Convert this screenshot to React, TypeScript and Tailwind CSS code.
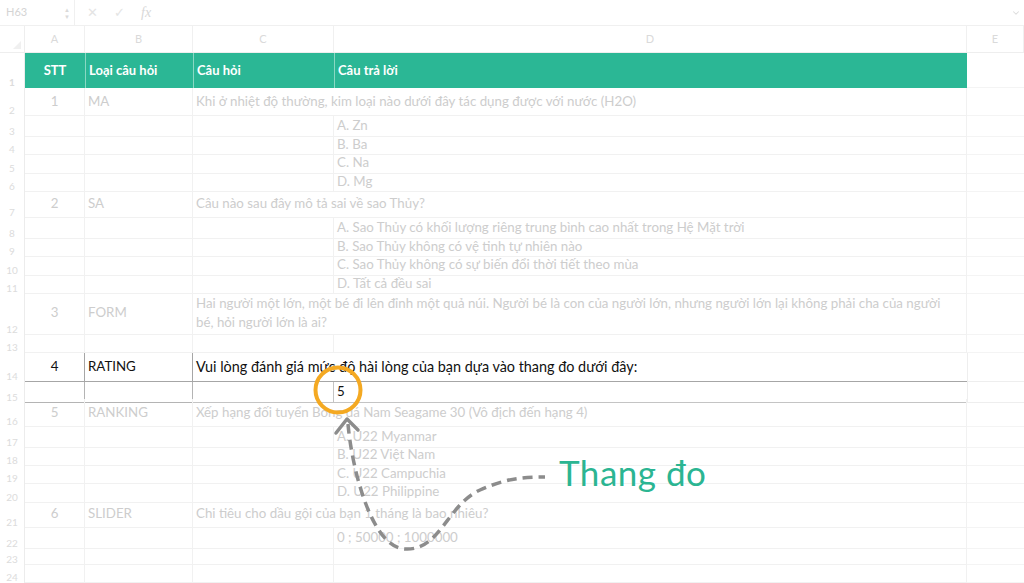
import { ChevronDown } from "lucide-react";

type RowData = {
  n: number;
  h: string;
  a?: string;
  b?: string;
  c?: React.ReactNode;
  d?: string;
};

const rows: RowData[] = [
  { n: 2, h: "h-[28px]", a: "1", b: "MA", c: "Khi ở nhiệt độ thường, kim loại nào dưới đây tác dụng được với nước (H2O)" },
  { n: 3, h: "h-[18.5px]", d: "A. Zn" },
  { n: 4, h: "h-[18.5px]", d: "B. Ba" },
  { n: 5, h: "h-[18.5px]", d: "C. Na" },
  { n: 6, h: "h-[18.5px]", d: "D. Mg" },
  { n: 7, h: "h-[28px]", a: "2", b: "SA", c: "Câu nào sau đây mô tả sai về sao Thủy?" },
  { n: 8, h: "h-[18.5px]", d: "A. Sao Thủy có khối lượng riêng trung bình cao nhất trong Hệ Mặt trời" },
  { n: 9, h: "h-[18.5px]", d: "B. Sao Thủy không có vệ tinh tự nhiên nào" },
  { n: 10, h: "h-[18.5px]", d: "C. Sao Thủy không có sự biến đổi thời tiết theo mùa" },
  { n: 11, h: "h-[18.5px]", d: "D. Tất cả đều sai" },
  {
    n: 12,
    h: "h-[43px]",
    a: "3",
    b: "FORM",
    c: (
      <>
        Hai người một lớn, một bé đi lên đỉnh một quả núi. Người bé là con của người lớn, nhưng người lớn lại không phải cha của người
        <br />
        bé, hỏi người lớn là ai?
      </>
    ),
  },
  { n: 13, h: "h-[18px]" },
];

const rowsAfter: RowData[] = [
  { n: 16, h: "h-[28px]", a: "5", b: "RANKING", c: "Xếp hạng đối tuyển Bóng đá Nam Seagame 30 (Vô địch đến hạng 4)" },
  { n: 17, h: "h-[18.25px]", d: "A. U22 Myanmar" },
  { n: 18, h: "h-[18.25px]", d: "B. U22 Việt Nam" },
  { n: 19, h: "h-[18.25px]", d: "C. U22 Campuchia" },
  { n: 20, h: "h-[18.25px]", d: "D. U22 Philippine" },
  { n: 21, h: "h-[28px]", a: "6", b: "SLIDER", c: "Chi tiêu cho dầu gội của bạn 1 tháng là bao nhiêu?" },
  { n: 22, h: "h-[19px]", d: "0 ; 50000 ; 1000000" },
  { n: 23, h: "h-[18px]" },
  { n: 24, h: "h-[18px]" },
];

const gridCols = "grid grid-cols-[25px_60px_108px_141px_633px_1fr]";

function RowNum({ n }: { n: number }) {
  return (
    <div className="flex items-end justify-center pb-[1px] text-[10px] leading-none text-[#dcdcdc] border-r border-[#ececec]">
      {n}
    </div>
  );
}

function SheetRow({ row }: { row: RowData }) {
  const cell = "flex items-center px-[3px] border-r border-b border-[#f1f1f1] whitespace-nowrap overflow-visible";
  return (
    <div className={`${gridCols} ${row.h} text-[13.3px] text-[#cdcdcd]`}>
      <RowNum n={row.n} />
      <div className={`${cell} justify-center`}>{row.a}</div>
      <div className={cell}>{row.b}</div>
      {row.c ? (
        <div className={`${cell} col-span-2 leading-[19px]`}>
          <div>{row.c}</div>
        </div>
      ) : (
        <>
          <div className={cell} />
          <div className={cell}>{row.d}</div>
        </>
      )}
      <div className="border-b border-[#f4f4f4]" />
    </div>
  );
}

function Annotation() {
  return (
    <div className="absolute inset-0 pointer-events-none">
      <svg width="1024" height="583" viewBox="0 0 1024 583" className="absolute inset-0">
        <circle cx="338" cy="390" r="22.5" fill="none" stroke="#f4a922" strokeWidth="4" />
        <path
          d="M348 424 C 352 470, 372 548, 405 549 C 440 551, 447 505, 480 490 C 505 479, 520 477, 545 477"
          fill="none"
          stroke="#8c8c8c"
          strokeWidth="3.5"
          strokeDasharray="10 6"
          strokeLinecap="butt"
        />
        <path d="M336 433 L347 419 L358 430" fill="none" stroke="#8c8c8c" strokeWidth="3.5" strokeLinecap="round" strokeLinejoin="round" />
      </svg>
      <div className="absolute left-[559px] top-[455px] text-[35px] leading-none text-[#2bb592] font-[Lato,'Open_Sans',sans-serif] tracking-[0.5px]">
        Thang đo
      </div>
    </div>
  );
}

export default function App() {
  return (
    <div className="relative w-[1024px] h-[583px] overflow-hidden bg-white font-[Lato,'Liberation_Sans',sans-serif]">
      {/* formula bar */}
      <div className="flex h-[26px] items-center border-b border-[#f0f0f0] text-[#d4d4d4]">
        <div className="flex h-full w-[75px] items-center justify-between pl-[6px] pr-[4px] border-r border-[#f0f0f0]">
          <span className="text-[11px]">H63</span>
          <span className="flex flex-col text-[6px] leading-[7px] text-[#dadada]">
            <span>▲</span>
            <span>▼</span>
          </span>
        </div>
        <div className="flex items-center gap-[16px] pl-[12px] text-[13px] text-[#e4e4e4]">
          <span>✕</span>
          <span>✓</span>
          <span className="font-['Liberation_Serif',serif] italic text-[14px] text-[#d8d8d8]">fx</span>
        </div>
        <div className="ml-auto pr-[3px] text-[#dcdcdc]">
          <ChevronDown className="size-[10px]" strokeWidth={2.5} />
        </div>
      </div>

      {/* column headers */}
      <div className={`${gridCols} h-[27px] text-[11px] text-[#dadada] border-b border-[#eeeeee]`}>
        <div className="relative border-r border-[#eeeeee]">
          <span className="absolute right-[3px] bottom-[3px] h-0 w-0 border-l-[8px] border-t-[8px] border-l-transparent border-t-transparent border-r-0 border-b-[8px] border-b-[#f0f0f0]" />
        </div>
        {["A", "B", "C", "D", "E"].map((l) => (
          <div key={l} className="flex items-center justify-center border-r border-[#f0f0f0]">
            {l}
          </div>
        ))}
      </div>

      {/* header row 1 */}
      <div className={`${gridCols} h-[35px] text-[13px] font-bold text-white`}>
        <RowNum n={1} />
        <div className="flex items-center justify-center bg-[#2bb795]">STT</div>
        <div className="flex items-center px-[3px] bg-[#2bb795] border-l border-[#8ad8c3]">Loại câu hỏi</div>
        <div className="flex items-center px-[3px] bg-[#2bb795] border-l border-[#8ad8c3]">Câu hỏi</div>
        <div className="flex items-center px-[3px] bg-[#2bb795] border-l border-[#8ad8c3]">Câu trả lời</div>
        <div className="border-b border-[#f4f4f4]" />
      </div>

      {rows.map((r) => (
        <SheetRow key={r.n} row={r} />
      ))}

      {/* row 14 - rating */}
      <div className={`${gridCols} h-[29px] text-[13.3px] text-[#111111]`}>
        <RowNum n={14} />
        <div className="flex items-center justify-center border-r border-b border-[#a6a6a6]">4</div>
        <div className="flex items-center px-[3px] border-r border-b border-[#a6a6a6]">RATING</div>
        <div className="col-span-2 flex items-center px-[3px] border-b border-[#a6a6a6] whitespace-nowrap text-[14.4px]">
          Vui lòng đánh giá mức độ hài lòng của bạn dựa vào thang đo dưới đây:
        </div>
        <div className="border-l border-b border-[#eeeeee]" />
      </div>

      {/* row 15 */}
      <div className={`${gridCols} h-[17px] text-[13.3px] text-[#111111]`}>
        <RowNum n={15} />
        <div className="border-r border-b border-[#b4b4b4]" />
        <div className="border-r border-b border-[#b4b4b4]" />
        <div className="border-r border-b border-[#c4c4c4]" />
        <div className="flex items-center px-[3px] border-b border-[#c4c4c4]">5</div>
        <div className="border-l border-b border-[#eeeeee]" />
      </div>

      {rowsAfter.map((r) => (
        <SheetRow key={r.n} row={r} />
      ))}

      <Annotation />
    </div>
  );
}
